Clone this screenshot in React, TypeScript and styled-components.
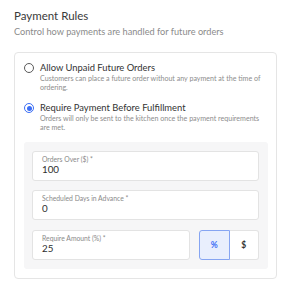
import React from "react";
import styled, { createGlobalStyle } from "styled-components";

const Global = createGlobalStyle`
  html, body { margin: 0; padding: 0; background: #ffffff; }
  body { font-family: Lato, "Open Sans", "Liberation Sans", sans-serif; -webkit-font-smoothing: antialiased; }
  * { box-sizing: border-box; }
`;

const Page = styled.div`
  width: 296px;
  height: 288px;
  padding: 9px 19px 0 14px;
`;

const Title = styled.h2`
  margin: 0;
  font-size: 11.5px;
  line-height: 14px;
  font-weight: 400;
  color: #3a3a3a;
`;

const Subtitle = styled.p`
  margin: 3px 0 0;
  font-size: 9.2px;
  line-height: 12px;
  color: #8b8b8b;
`;

const Card = styled.div`
  margin-top: 14px;
  border: 1px solid #e5e5e5;
  border-radius: 4px;
  padding: 9px 8px 9px 9px;
  display: flex;
  flex-direction: column;
  gap: 10px;
`;

const Option = styled.div`
  display: flex;
  gap: 6px;
  align-items: flex-start;
`;

const Radio = styled.span<{ $checked?: boolean }>`
  flex: none;
  width: 10px;
  height: 10px;
  margin-top: 1px;
  border-radius: 50%;
  border: 1.4px solid ${(p) => (p.$checked ? "#3b6ef5" : "#5a5a5a")};
  display: flex;
  align-items: center;
  justify-content: center;
  &::after {
    content: "";
    display: ${(p) => (p.$checked ? "block" : "none")};
    width: 5px;
    height: 5px;
    border-radius: 50%;
    background: #3b6ef5;
  }
`;

const OptionText = styled.div`
  display: flex;
  flex-direction: column;
`;

const OptionLabel = styled.div`
  font-size: 9.4px;
  line-height: 12px;
  color: #333333;
`;

const OptionDesc = styled.div`
  margin-top: 1px;
  font-size: 7.1px;
  line-height: 8.5px;
  color: #8d8d8d;
`;

const Panel = styled.div`
  margin-top: -0.5px;
  background: #f6f6f7;
  border-radius: 3px;
  padding: 9px 9px 9px 8px;
  display: flex;
  flex-direction: column;
  gap: 9.5px;
`;

const Field = styled.div`
  flex: 1 1 auto;
  height: 30px;
  background: #ffffff;
  border: 1px solid #e3e3e3;
  border-radius: 3px;
  padding: 3px 9px 0;
  display: flex;
  flex-direction: column;
`;

const FieldLabel = styled.div`
  font-size: 6.8px;
  line-height: 8px;
  color: #8a8a8a;
`;

const FieldValue = styled.div`
  font-size: 9.8px;
  line-height: 12px;
  color: #2e2e2e;
`;

const Row = styled.div`
  display: flex;
  gap: 9px;
`;

const Toggle = styled.div`
  display: flex;
  flex: none;
  width: 60px;
  height: 30px;
`;

const ToggleBtn = styled.button<{ $active?: boolean; $pos: "left" | "right" }>`
  flex: 1;
  margin: 0;
  padding: 0;
  font-family: inherit;
  font-size: 8.5px;
  font-weight: 700;
  color: ${(p) => (p.$active ? "#3b6ef5" : "#333333")};
  background: ${(p) => (p.$active ? "#e9effd" : "#ffffff")};
  border: 1px solid ${(p) => (p.$active ? "#86a5f2" : "#e3e3e3")};
  ${(p) => (p.$pos === "right" ? "border-left: none;" : "")}
  border-radius: ${(p) => (p.$pos === "left" ? "3px 0 0 3px" : "0 3px 3px 0")};
`;

export default function App() {
  return (
    <>
      <Global />
      <Page>
        <Title>Payment Rules</Title>
        <Subtitle>Control how payments are handled for future orders</Subtitle>
        <Card>
          <Option>
            <Radio />
            <OptionText>
              <OptionLabel>Allow Unpaid Future Orders</OptionLabel>
              <OptionDesc>
                Customers can place a future order without any payment at the time of ordering.
              </OptionDesc>
            </OptionText>
          </Option>
          <Option>
            <Radio $checked />
            <OptionText>
              <OptionLabel>Require Payment Before Fulfillment</OptionLabel>
              <OptionDesc>
                Orders will only be sent to the kitchen once the payment requirements are met.
              </OptionDesc>
            </OptionText>
          </Option>
          <Panel>
            <Field>
              <FieldLabel>Orders Over ($) *</FieldLabel>
              <FieldValue>100</FieldValue>
            </Field>
            <Field>
              <FieldLabel>Scheduled Days in Advance *</FieldLabel>
              <FieldValue>0</FieldValue>
            </Field>
            <Row>
              <Field>
                <FieldLabel>Require Amount (%) *</FieldLabel>
                <FieldValue>25</FieldValue>
              </Field>
              <Toggle>
                <ToggleBtn $active $pos="left">%</ToggleBtn>
                <ToggleBtn $pos="right">$</ToggleBtn>
              </Toggle>
            </Row>
          </Panel>
        </Card>
      </Page>
    </>
  );
}
